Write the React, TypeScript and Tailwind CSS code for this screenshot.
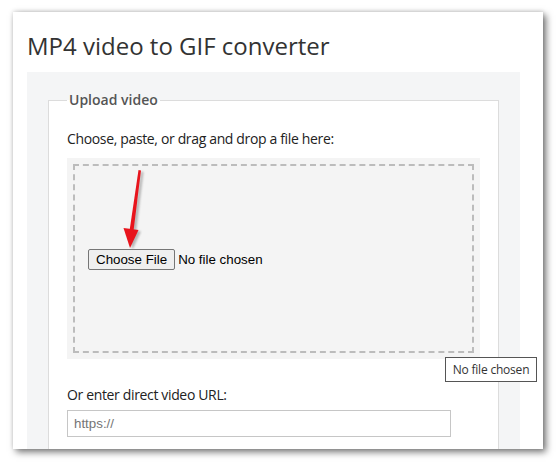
import React from "react";

export default function App() {
  return (
    <div className="w-[557px] h-[463px] bg-white relative overflow-hidden" style={{ fontFamily: "'Open Sans', 'Noto Sans', sans-serif" }}>
      <div className="absolute left-[13px] top-[12px] w-[530px] h-[437px] bg-white overflow-hidden shadow-[3px_3px_7px_rgba(0,0,0,0.55),0_-1px_4px_rgba(0,0,0,0.12)]">
        <div className="pl-[14px] pt-[18px]">
          <h1 className="text-[24px] leading-[32px] text-[#333] font-normal">MP4 video to GIF converter</h1>
          <div className="mt-[10px] w-[493px] h-[400px] bg-[#f4f5f6] pl-[21px] pt-[19px]">
            <fieldset className="w-[451px] h-[400px] bg-white border border-[#dcdcdc] pl-[18px] pr-[18px] pt-[8px]">
              <legend className="px-[2px] text-[14px] font-semibold text-[#555] leading-[18px]">Upload video</legend>
              <p className="text-[14px] leading-[20px] text-[#222] mt-[12px] tracking-[-0.35px]">Choose, paste, or drag and drop a file here:</p>
              <div className="mt-[9px] w-[413px] h-[201px] bg-[#f4f4f4] p-[6px]">
                <div className="w-full h-full border-2 border-dashed border-[#bcbcbc] flex items-center pl-[13px]">
                  <div className="flex items-center mt-[2px]" style={{ fontFamily: "'Liberation Sans', Arial, sans-serif" }}>
                    <button className="h-[21px] px-[7px] bg-[#efefef] border border-[#767676] rounded-[2px] text-[13.33px] leading-[19px] text-black">Choose File</button>
                    <span className="ml-[3px] text-[13.33px] text-black">No file chosen</span>
                  </div>
                </div>
              </div>
              <p className="text-[14px] leading-[20px] text-[#222] mt-[26px] tracking-[-0.35px]">Or enter direct video URL:</p>
              <input
                className="mt-[5px] w-[384px] h-[27px] border border-[#c6c6c6] px-[6px] text-[13.33px] outline-none placeholder:text-[#757575]"
                style={{ fontFamily: "'Liberation Sans', Arial, sans-serif" }}
                placeholder="https://"
              />
            </fieldset>
          </div>
        </div>
      </div>
      <svg className="absolute left-0 top-0" width="557" height="463" viewBox="0 0 557 463">
        <defs>
          <filter id="sh" x="-50%" y="-50%" width="200%" height="200%">
            <feGaussianBlur stdDeviation="1.2" />
          </filter>
        </defs>
        <g transform="translate(2.5,1.5)" fill="#9a9a9a" opacity="0.7" filter="url(#sh)">
          <polygon points="138.5,170 141,170.5 133.5,231 129.5,231" />
          <polygon points="123.5,228 138.5,230 130,248" />
        </g>
        <polygon points="138.5,170 141,170.5 133.5,231 129.5,231" fill="#e8141c" />
        <polygon points="123.5,228 138.5,230 130,248" fill="#e8141c" />
      </svg>
      <div className="absolute left-[445px] top-[357px] w-[92px] h-[25px] bg-white border border-[#555] flex items-center justify-center text-[12px] text-[#333] tracking-[-0.2px]">
        No file chosen
      </div>
    </div>
  );
}
